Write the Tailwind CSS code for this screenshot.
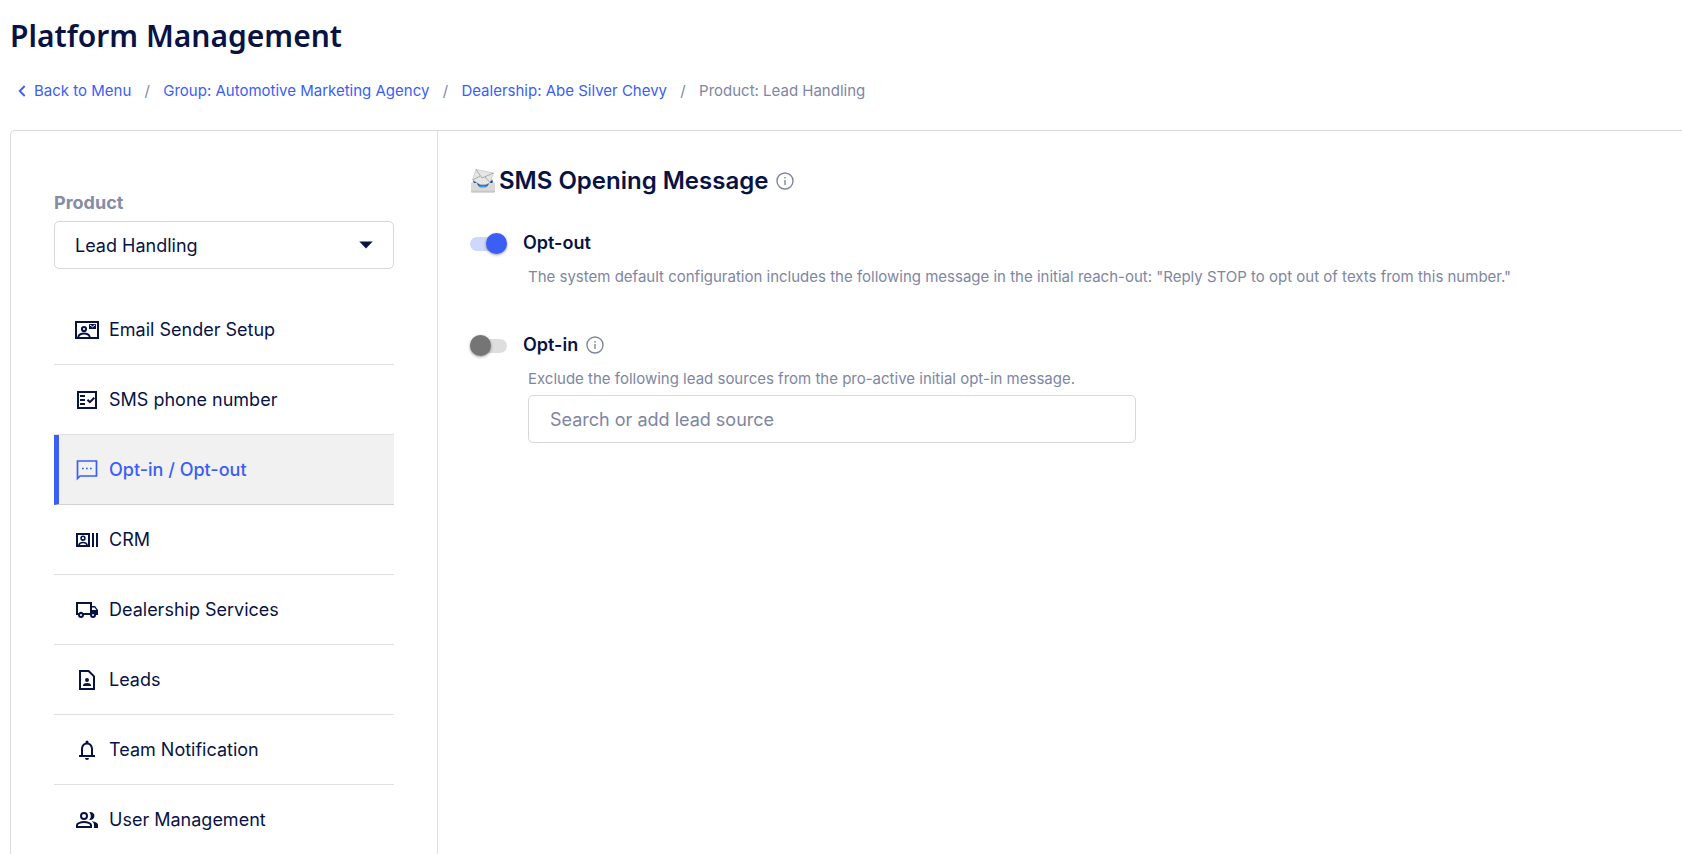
<!DOCTYPE html>
<html lang="en">
<head>
    <meta charset="UTF-8">
    <meta name="viewport" content="width=device-width, initial-scale=1.0">
    <title>Platform Management</title>
    <script src="https://cdn.jsdelivr.net/npm/@tailwindcss/browser@4"></script>
</head>
<body class="min-h-screen flex flex-col overflow-x-hidden bg-white font-['Inter',sans-serif] text-[#081344]">

    <header class="pl-[10px] pt-4">
        <h1 class="font-['Noto_Sans',sans-serif] text-[30px] leading-10 font-semibold">Platform Management</h1>
        <nav aria-label="Breadcrumb" class="mt-[23px] ml-1 flex items-center text-[15px] leading-6 text-[#3b5ef5]">
            <a href="#" class="flex items-center">
                <svg class="w-4 h-4 mr-1" viewBox="0 0 16 16" fill="none" stroke="currentColor" stroke-width="1.8"><path d="M10.7 3 5.7 8l5 5"/></svg>
                Back to Menu
            </a>
            <span class="w-8 text-center text-[#7e86a3]">/</span>
            <a href="#">Group: Automotive Marketing Agency</a>
            <span class="w-8 text-center text-[#7e86a3]">/</span>
            <a href="#">Dealership: Abe Silver Chevy</a>
            <span class="w-8 text-center text-[#7e86a3]">/</span>
            <span class="text-[#7e86a3]">Product: Lead Handling</span>
        </nav>
    </header>

    <div class="mt-[27px] ml-[10px] flex grow border-t border-l border-[#d9dae3] rounded-tl-[5px]">

        <!-- Sidebar -->
        <aside class="w-[427px] shrink-0 border-r border-[#e0e0e0] px-[43px] pt-[60px]">
            <label for="product" class="block text-[18px] leading-6 font-bold text-[#858ca6]">Product</label>
            <div class="relative mt-[6px]">
                <select id="product" class="block w-full h-12 appearance-none rounded-[5px] border border-[#d5d6e2] bg-white pl-5 pr-12 text-[18px]">
                    <option>Lead Handling</option>
                </select>
                <svg class="pointer-events-none absolute right-[21px] top-5 w-[14px] h-2" viewBox="0 0 14 8" fill="currentColor"><path d="M.3.6h13.4L7 7.6z"/></svg>
            </div>

            <nav aria-label="Product settings" class="mt-[26px] text-[18px]">
                <a href="#" class="flex h-[70px] items-center gap-[10px] border-b border-[#e0e0e0] pl-[21px]">
                    <svg class="w-6 h-6" viewBox="0 0 24 24" fill="none" stroke="currentColor" stroke-width="2"><path d="M1 4h22v16H1z"/><circle cx="9" cy="11" r="2.1"/><path d="M3.2 19c.7-2.2 3-3.4 5.8-3.4s5.1 1.2 5.8 3.4"/><path fill="currentColor" stroke="none" d="M14 6h7v5h-7z"/><path stroke="#fff" stroke-width="1" d="m14.8 6.9 2.7 1.9 2.7-1.9"/></svg>
                    Email Sender Setup
                </a>
                <a href="#" class="flex h-[70px] items-center gap-[10px] border-b border-[#e0e0e0] pl-[21px]">
                    <svg class="w-6 h-6" viewBox="0 0 24 24" fill="none" stroke="currentColor" stroke-width="2"><path d="M3 4h18v16H3zM5 8h5M5 12h5M5 16h5M12.5 11.7l2.4 2.4 4.4-4.4"/></svg>
                    SMS phone number
                </a>
                <a href="#" aria-current="page" class="flex h-[70px] items-center gap-[10px] border-b border-b-[#d2d2d2] border-l-[5px] border-l-[#3b5ef5] bg-[#f1f1f1] pl-4 font-medium text-[#3b5ef5]">
                    <svg class="w-6 h-6" viewBox="0 0 24 24" fill="none" stroke="currentColor" stroke-width="1.7"><path d="M2.5 20.5V3h19v15H5z"/><path d="M7 10.5h1.7M11 10.5h1.7M15 10.5h1.7"/></svg>
                    Opt-in / Opt-out
                </a>
                <a href="#" class="flex h-[70px] items-center gap-[10px] border-b border-[#e0e0e0] pl-[21px]">
                    <svg class="w-6 h-6" viewBox="0 0 24 24" fill="none" stroke="currentColor" stroke-width="2"><path d="M2 6h12v12H2zM18 5v14M22 5v14"/><circle cx="8" cy="10.2" r="1.9" stroke-width="1.6"/><path stroke-width="1.5" d="M3.8 17.2c.5-1.8 2.2-2.6 4.2-2.6s3.7.8 4.2 2.6"/></svg>
                    CRM
                </a>
                <a href="#" class="flex h-[70px] items-center gap-[10px] border-b border-[#e0e0e0] pl-[21px]">
                    <svg class="w-6 h-6" viewBox="0 0 24 24" fill="currentColor"><path fill-rule="evenodd" d="M20 8h-3V4H1v13h2a3 3 0 0 0 6 0h6a3 3 0 0 0 6 0h2v-5l-3-4zm-.5 1.5 1.96 2.5H17V9.5h2.5zM6 18a1 1 0 1 1 0-2 1 1 0 0 1 0 2zm2.22-3a2.99 2.99 0 0 0-4.44 0H3V6h12v9H8.22zM18 18a1 1 0 1 1 0-2 1 1 0 0 1 0 2z"/></svg>
                    Dealership Services
                </a>
                <a href="#" class="flex h-[70px] items-center gap-[10px] border-b border-[#e0e0e0] pl-[21px]">
                    <svg class="w-6 h-6" viewBox="0 0 24 24" fill="currentColor"><path fill="none" stroke="currentColor" stroke-width="2" d="M5 3h8.6L19 8.4V21H5z"/><circle cx="12" cy="12" r="2"/><path d="M8 18v-.6c0-1.6 2-2.4 4-2.4s4 .8 4 2.4v.6z"/></svg>
                    Leads
                </a>
                <a href="#" class="flex h-[70px] items-center gap-[10px] border-b border-[#e0e0e0] pl-[21px]">
                    <svg class="w-6 h-6" viewBox="0 0 24 24" fill="currentColor"><path fill-rule="evenodd" d="M12 22a2 2 0 0 0 2-2h-4c0 1.1.9 2 2 2zm6-5v-6c0-3.07-1.63-5.64-4.5-6.32V4a1.5 1.5 0 0 0-3 0v.68C7.64 5.36 6 7.92 6 11v6H4v2h16v-2h-2zm-2 0H8v-6c0-2.48 1.51-4.5 4-4.5s4 2.02 4 4.5v6z"/></svg>
                    Team Notification
                </a>
                <a href="#" class="flex h-[70px] items-center gap-[10px] border-b border-[#e0e0e0] pl-[21px]">
                    <svg class="w-6 h-6" viewBox="0 0 24 24" fill="none" stroke="currentColor" stroke-width="2"><circle cx="9" cy="8" r="3"/><path d="M2 19v-2c0-1.8 4-3 7-3s7 1.2 7 3v2z"/><path fill="currentColor" stroke="none" d="M14.2 4.2A4 4 0 1 1 14.2 11.8C15.3 10.8 15.8 9.5 15.8 8s-.5-2.8-1.6-3.8zM16.7 13.3C20 13.8 23 15 23 17v3h-4v-3c0-1.6-.9-2.8-2.3-3.7z"/></svg>
                    User Management
                </a>
            </nav>
        </aside>

        <!-- Opening message settings -->
        <main class="grow min-w-0 px-8 pt-8">
            <h2 class="flex items-center text-[24px] leading-9 font-semibold">
                <svg class="w-[26px] h-[26px] mr-[3px]" viewBox="0 0 26 26" aria-hidden="true">
                    <path fill="#e4e4e2" d="M1 15.5 4.500 10h17l3.500 5.500z"/>
                    <path fill="#174f8f" d="M3 12.500h20l-2 8H6z"/>
                    <path fill="#3f93e0" d="M7 17.500h12v4H7z"/>
                    <path fill="#e6e6e5" stroke="#b9b9b9" stroke-width=".6" d="m6 1.500 17.500 3.500-3.500 9.500c-3 2.500-8 3-11 1.500L2.500 12z"/>
                    <path fill="none" stroke="#9a9a9a" stroke-width=".8" d="m6 1.500 6 8.500 11.500-5M3 12l7-4M19.500 14 15 9"/>
                    <path fill="#dad9d7" d="M1 15h5.500c1 0 1.500 4.500 4 4.500h5c2.500 0 3-4.500 4-4.500H25v8.500a1 1 0 0 1-1 1H2a1 1 0 0 1-1-1z"/>
                    <path fill="#c9c7c4" d="M1 22.800h24v1l-.7.7H1.700l-.7-.7z"/>
                </svg>
                SMS Opening Message
                <button type="button" aria-label="About the opening message" class="ml-2 text-[#7e86a3]">
                    <svg class="block w-[18px] h-[18px]" viewBox="0 0 18 18" fill="none" stroke="currentColor" stroke-width="1.4"><circle cx="9" cy="9" r="8"/><path d="M9 8v5M9 5v1.5"/></svg>
                </button>
            </h2>

            <section class="mt-8">
                <div class="flex items-center text-[18px] leading-6 font-semibold">
                    <label class="relative mr-4 block h-6 w-[37px]">
                        <input type="checkbox" role="switch" checked aria-label="Opt-out" class="peer sr-only">
                        <span class="absolute inset-x-0 top-[6px] h-[14px] rounded-full bg-[#dedede] peer-checked:bg-[#ced7fc]"></span>
                        <span class="absolute left-0 top-[2px] size-[21px] rounded-full bg-[#757575] shadow-[0_1px_3px_rgba(0,0,0,0.4)] peer-checked:left-4 peer-checked:bg-[#3b5ef5]"></span>
                    </label>
                    <h3>Opt-out</h3>
                </div>
                <p class="mt-[10px] ml-[58px] text-[15px] leading-6 text-[#7e86a3]">The system default configuration includes the following message in the initial reach-out: "Reply STOP to opt out of texts from this number."</p>
            </section>

            <section class="mt-11">
                <div class="flex items-center text-[18px] leading-6 font-semibold">
                    <label class="relative mr-4 block h-6 w-[37px]">
                        <input type="checkbox" role="switch" aria-label="Opt-in" class="peer sr-only">
                        <span class="absolute inset-x-0 top-[6px] h-[14px] rounded-full bg-[#dedede] peer-checked:bg-[#ced7fc]"></span>
                        <span class="absolute left-0 top-[2px] size-[21px] rounded-full bg-[#757575] shadow-[0_1px_3px_rgba(0,0,0,0.4)] peer-checked:left-4 peer-checked:bg-[#3b5ef5]"></span>
                    </label>
                    <h3>Opt-in</h3>
                    <button type="button" aria-label="About opt-in" class="ml-2 text-[#7e86a3]">
                        <svg class="block w-[18px] h-[18px]" viewBox="0 0 18 18" fill="none" stroke="currentColor" stroke-width="1.4"><circle cx="9" cy="9" r="8"/><path d="M9 8v5M9 5v1.5"/></svg>
                    </button>
                </div>
                <div class="mt-[10px] ml-[58px]">
                    <label for="lead-source" class="block text-[15px] leading-6 text-[#7e86a3]">Exclude the following lead sources from the pro-active initial opt-in message.</label>
                    <input id="lead-source" type="text" placeholder="Search or add lead source" class="mt-1 block h-12 w-full max-w-[608px] rounded-[5px] border border-[#d5d6e2] px-[21px] text-[18px] placeholder:text-[#7e86a3]">
                </div>
            </section>
        </main>
    </div>

</body>
</html>
